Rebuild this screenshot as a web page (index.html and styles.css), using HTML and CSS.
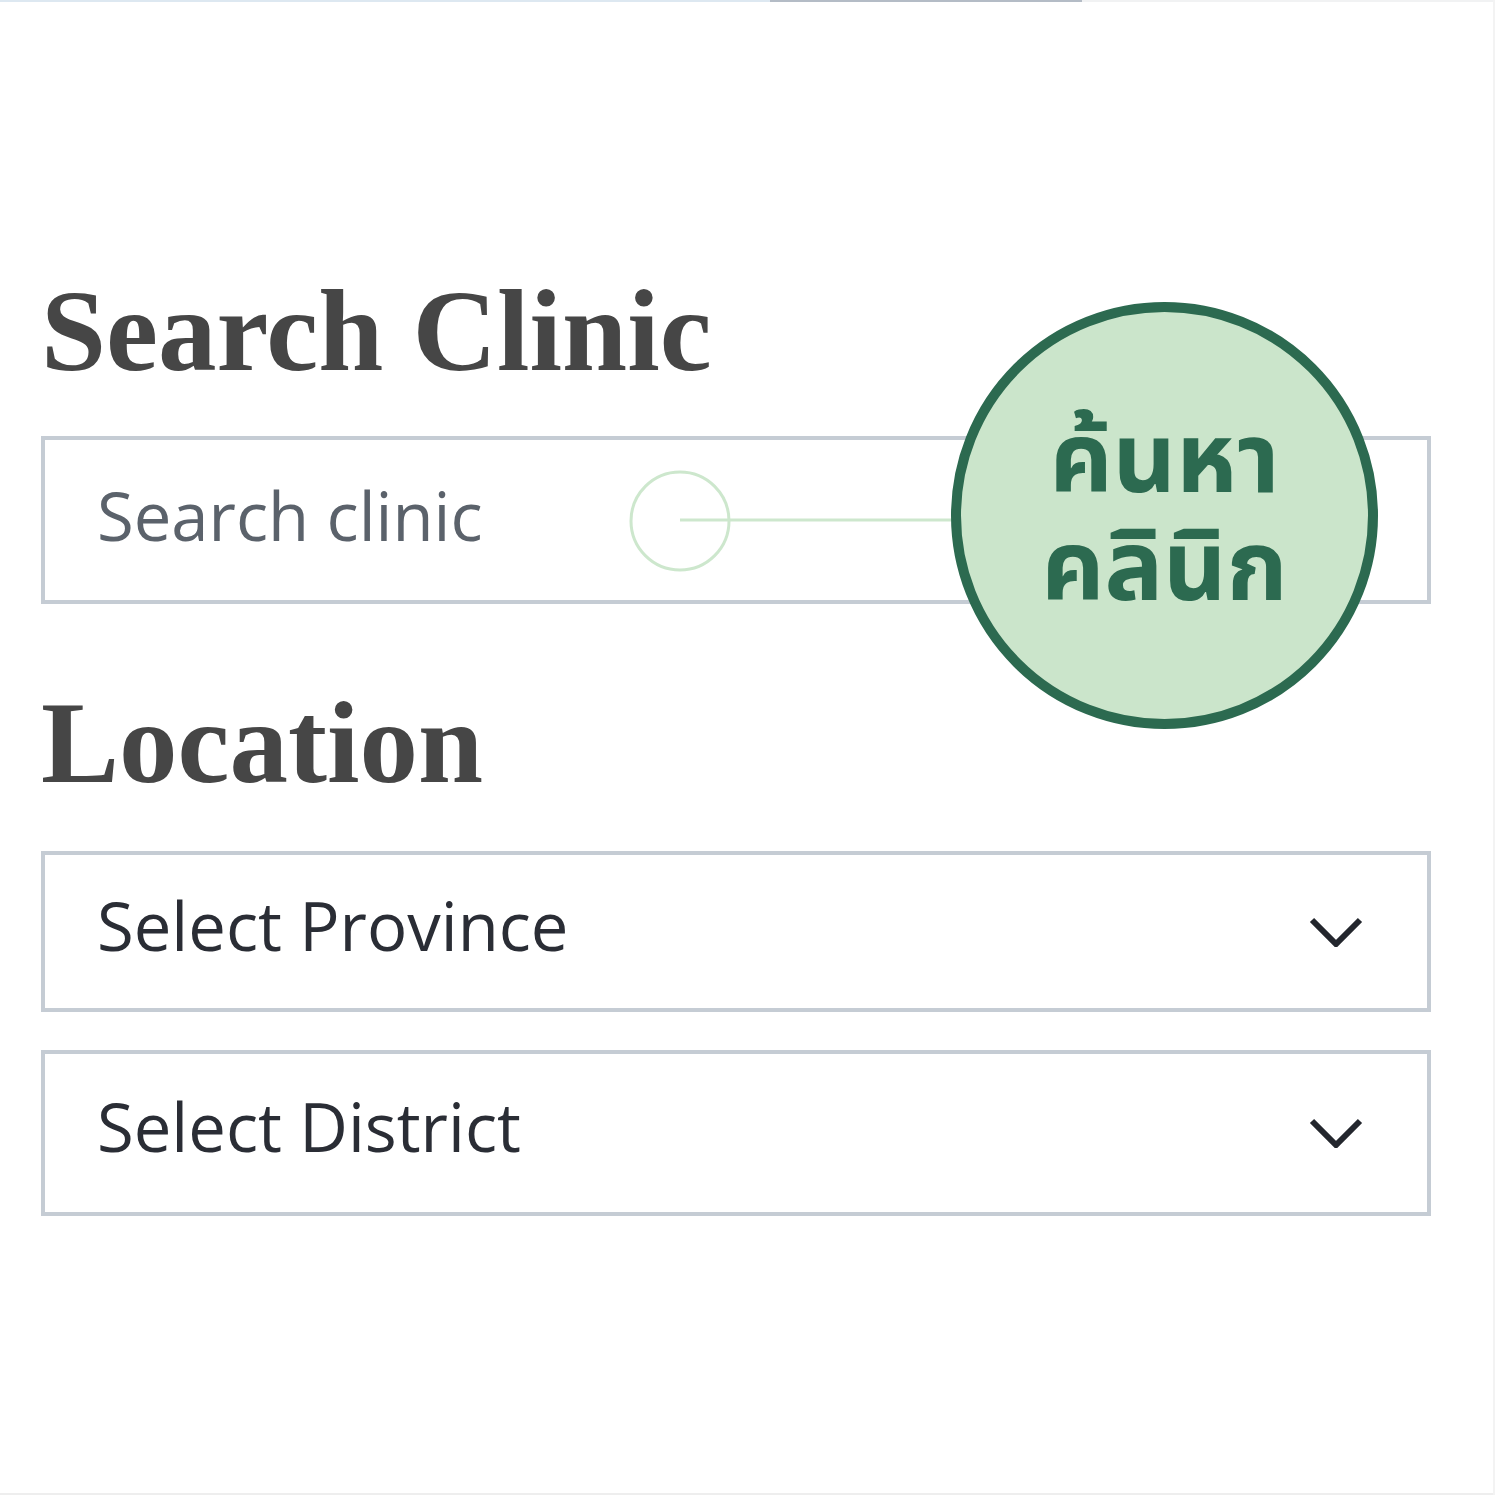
FILE: index.html
```html
<!DOCTYPE html>
<html lang="en">
<head>
<meta charset="utf-8">
<title>Search Clinic</title>
<link rel="stylesheet" href="styles.css">
</head>
<body>
<div class="page">
  <div class="top-strip"><span class="seg seg-blue"></span><span class="seg seg-gray"></span><span class="seg seg-light"></span></div>
  <main class="panel">
    <h1 class="title">Search Clinic</h1>
    <div class="field-wrap">
      <div class="field"><span class="placeholder">Search clinic</span></div>
      <svg class="callout-line" width="330" height="106" viewBox="0 0 330 106">
        <circle cx="53" cy="53" r="49" fill="none" stroke="#cde7cd" stroke-width="3"/>
        <line x1="53" y1="52" x2="330" y2="52" stroke="#cde7cd" stroke-width="3"/>
      </svg>
      <div class="badge"><span class="badge-text">ค้นหา<br>คลินิก</span></div>
    </div>
    <h2 class="title title-loc">Location</h2>
    <div class="select"><span class="select-text">Select Province</span>
      <svg class="chev" width="54" height="30" viewBox="0 0 54 30"><polyline points="3,3 27,27 51,3" fill="none" stroke="#23262d" stroke-width="6"/></svg>
    </div>
    <div class="select select-tall"><span class="select-text">Select District</span>
      <svg class="chev" width="54" height="30" viewBox="0 0 54 30"><polyline points="3,3 27,27 51,3" fill="none" stroke="#23262d" stroke-width="6"/></svg>
    </div>
  </main>
  <div class="bottom-strip"></div>
</div>
</body>
</html>
```

FILE: styles.css
```css
html, body {
  margin: 0;
  padding: 0;
  background: #ffffff;
}
.page {
  width: 1495px;
  height: 1495px;
  position: relative;
  overflow: hidden;
  background: #fff;
  box-sizing: border-box;
  border-right: 2px solid #f3f3f3;
}
.top-strip {
  display: flex;
  height: 2px;
}
.seg { display: block; height: 2px; }
.seg-blue { width: 770px; background: #dde8f1; }
.seg-gray { width: 312px; background: #b4bcc6; }
.seg-light { flex: 1; background: #f1f2f3; }
.bottom-strip {
  position: absolute;
  left: 0;
  right: 0;
  bottom: 0;
  height: 2px;
  background: #eeeeee;
}
.panel {
  padding: 264px 62px 0 41px;
  font-family: "Open Sans", "Noto Sans", sans-serif;
}
.title {
  margin: 0;
  font-family: "Liberation Serif", "Times New Roman", serif;
  font-weight: 700;
  font-size: 117px;
  line-height: 130px;
  color: #464646;
}
.field-wrap {
  position: relative;
  margin-top: 40px;
}
.field {
  height: 160px;
  border: 4px solid #c5ccd4;
  display: flex;
  align-items: center;
  padding-left: 52px;
}
.placeholder {
  font-size: 67px;
  color: #5b626b;
  margin-bottom: 10px;
}
.callout-line {
  position: absolute;
  left: 586px;
  top: 32px;
}
.badge {
  position: absolute;
  left: 910px;
  top: -134px;
  width: 407px;
  height: 407px;
  border: 10px solid #2c6a50;
  border-radius: 50%;
  background: #cbe5cb;
  display: flex;
  align-items: center;
  justify-content: center;
}
.badge-text {
  font-family: "Noto Sans Thai", "Noto Sans Thai UI", "Noto Sans", sans-serif;
  font-weight: 700;
  font-size: 98px;
  line-height: 108px;
  color: #2c6a50;
  text-align: center;
}
.title-loc {
  margin-top: 74px;
}
.select {
  height: 153px;
  border: 4px solid #c5ccd4;
  display: flex;
  align-items: center;
  justify-content: space-between;
  padding: 0 64px 0 52px;
  margin-top: 43px;
}
.select + .select { margin-top: 38px; }
.select-tall { height: 158px; }
.select-text {
  font-size: 67px;
  color: #2a2d35;
  margin-bottom: 14px;
}
.chev { display: block; }
```
